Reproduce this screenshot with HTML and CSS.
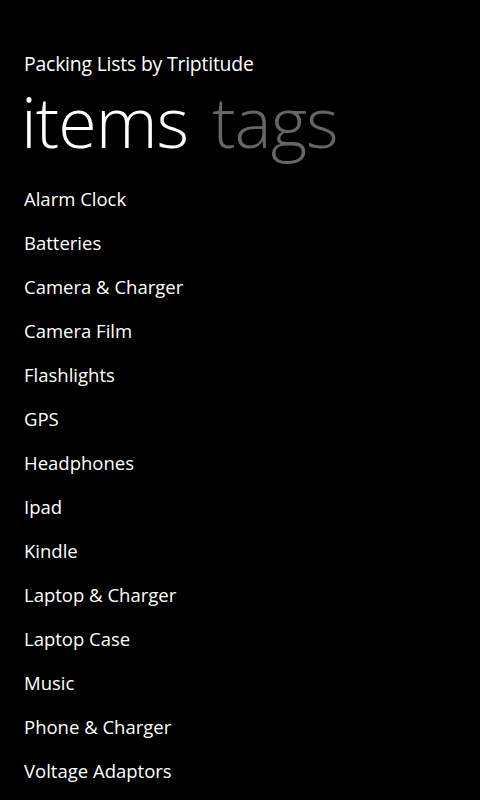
FILE: index.html
```html
<!DOCTYPE html>
<html>
<head>
<meta charset="utf-8">
<link rel="stylesheet" href="styles.css">
</head>
<body>
<div class="app">
  <div class="app-title">Packing Lists by Triptitude</div>
  <div class="pivot">
    <span class="pivot-item active">items</span>
    <span class="pivot-item">tags</span>
  </div>
  <div class="list-viewport">
    <ul class="list">
      <li>Alarm Clock</li>
      <li>Batteries</li>
      <li>Camera &amp; Charger</li>
      <li>Camera Film</li>
      <li>Flashlights</li>
      <li>GPS</li>
      <li>Headphones</li>
      <li>Ipad</li>
      <li>Kindle</li>
      <li>Laptop &amp; Charger</li>
      <li>Laptop Case</li>
      <li>Music</li>
      <li>Phone &amp; Charger</li>
      <li>Voltage Adaptors</li>
    </ul>
  </div>
</div>
</body>
</html>
```
FILE: styles.css
```css
html, body {
  margin: 0;
  padding: 0;
  background: #000;
  color: #fff;
  font-family: "Open Sans", "Noto Sans", sans-serif;
}
.app {
  width: 480px;
  height: 800px;
  display: flex;
  flex-direction: column;
  overflow: hidden;
}
.app-title {
  padding: 51px 0 0 24px;
  font-size: 19.4px;
  line-height: 26px;
  letter-spacing: -0.2px;
}
.pivot {
  display: flex;
  gap: 24px;
  padding-left: 21px;
  margin-top: 4px;
  font-size: 70px;
  font-weight: 300;
  line-height: 80px;
  letter-spacing: -1px;
  white-space: nowrap;
}
.pivot-item {
  color: #666;
}
.pivot-item.active {
  color: #fff;
}
.list-viewport {
  flex: 1;
  overflow: hidden;
  margin-top: 31px;
}
.list {
  list-style: none;
  margin: -15px 0 0 0;
  padding: 0 0 0 24px;
}
.list li {
  font-size: 18.5px;
  line-height: 44px;
  height: 44px;
}
```
